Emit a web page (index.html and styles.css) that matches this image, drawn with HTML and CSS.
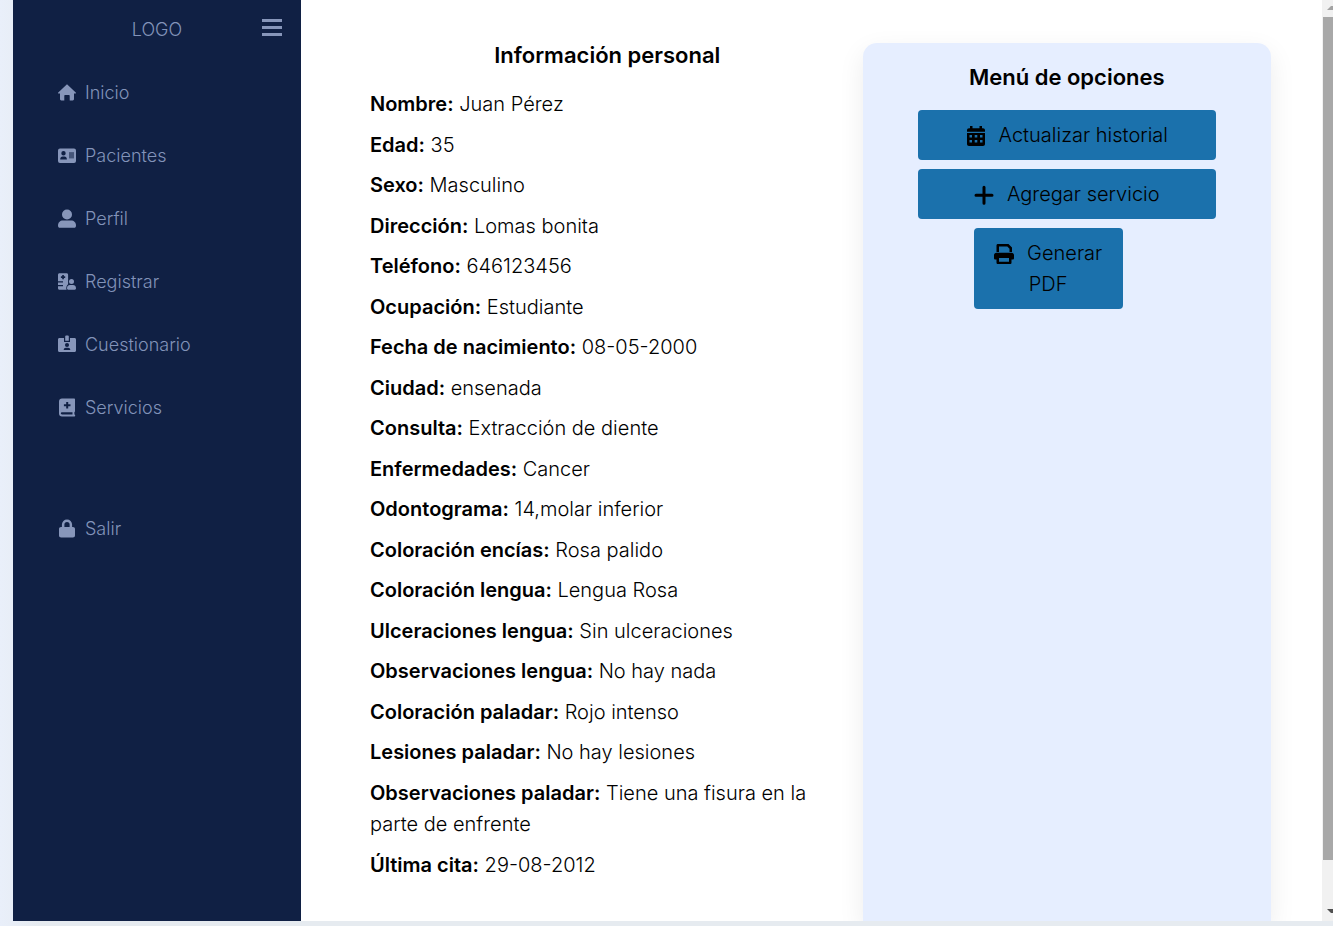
FILE: index.html
```html
<!DOCTYPE html>
<html lang="es">
<head>
<meta charset="utf-8">
<title>Información personal</title>
<link rel="stylesheet" href="styles.css">
</head>
<body>
<div class="frame">
  <aside class="sidebar">
    <div class="brand">
      <span class="brand-name">LOGO</span>
      <button class="toggle" type="button" aria-label="Menú">
        <svg width="20" height="18" viewBox="0 0 20 18"><path d="M0 1h20v3H0zM0 8h20v3H0zM0 15h20v3H0z"/></svg>
      </button>
    </div>
    <nav class="nav">
      <a href="#"><svg viewBox="0 0 18 20"><path d="M9 1.2 0 9.7c-.1.6.2.9.8.9H2V16c0 .9.5 1.4 1.3 1.4h3V13c0-.7.4-1 1-1h3.400c.6 0 1 .3 1 1v4.400h3c.8 0 1.300-.5 1.300-1.400v-5.400h1.200c.6 0 .9-.3.8-.9z"/></svg>Inicio</a>
      <a href="#"><svg viewBox="0 0 18 20"><path fill-rule="evenodd" d="M2 2.500h14a2 2 0 0 1 2 2v10.500a2 2 0 0 1-2 2H2a2 2 0 0 1-2-2V4.500a2 2 0 0 1 2-2zM5.500 5a2.200 2.200 0 1 0 0 4.400 2.200 2.200 0 0 0 0-4.400zM2.200 13.400h6.700c0-2-1-3-2.500-3H4.700c-1.500 0-2.500 1-2.500 3zM11 6.200v6h5v-6z"/><path opacity=".45" d="M11 6.200h5v6h-5z"/></svg>Pacientes</a>
      <a href="#"><svg viewBox="0 0 18 20"><circle cx="9" cy="5.500" r="5"/><path d="M0 16.500c0-3 2-5 5-5h8c3 0 5 2 5 5 0 1.500-.7 2.300-2 2.300H2c-1.300 0-2-.8-2-2.300z"/></svg>Perfil</a>
      <a href="#"><svg viewBox="0 0 18 20"><path fill-rule="evenodd" d="M1.500 1.200h7c1 0 1.600.6 1.600 1.600v9.400c-1.200 1-1.800 2.500-1.800 4.400 0 .4.100.8.400 1.100H1.500C.6 17.700 0 17 0 16.200v-2h5v-1.300H0v-2.300h5V9.300H0V2.800c0-1 .6-1.600 1.500-1.600zM4.200 3v1.300H2.900V6h1.300v1.300h1.700V6h1.300V4.300H5.900V3z"/><circle cx="13.500" cy="9.500" r="2.500"/><path d="M9 16.300c0-2.200 1.300-3.300 3-3.300h3c1.700 0 3 1.100 3 3.300 0 .9-.4 1.400-1.200 1.400h-6.600c-.8 0-1.200-.5-1.200-1.400z"/></svg>Registrar</a>
      <a href="#"><svg viewBox="0 0 18 20"><path d="M7.200 1.500c0-.6.300-1 .9-1h1.800c.6 0 .9.400.9 1v4.300H7.200z"/><path fill-rule="evenodd" d="M1.500 3H6v3.900h6V3h4.500c.9 0 1.500.6 1.500 1.500v11c0 .9-.6 1.500-1.500 1.500h-15C.6 17 0 16.400 0 15.500v-11C0 3.600.6 3 1.500 3zM9 7.900a2 2 0 1 0 0 4.100 2 2 0 0 0 0-4.100zM5.700 14.900h6.600c0-1.500-1-2.200-2.200-2.200H7.900c-1.200 0-2.200.7-2.200 2.200z"/></svg>Cuestionario</a>
      <a href="#"><svg viewBox="0 0 18 20"><path fill-rule="evenodd" d="M4 .5h12c.6 0 1 .4 1 1v11.800c0 .5-.2.800-.6 1v2.300c.5.100.8.500.8 1 0 .6-.4 1-1 1H4c-1.800 0-3-1.200-3-3V3.500c0-1.800 1.200-3 3-3zm0 13.800c-1.600 0-1.600 2.200 0 2.200h10.500v-2.200zM8.200 4v2.300H5.900v2h2.300v2.300h2V8.300h2.300v-2h-2.300V4z"/></svg>Servicios</a>
      <a class="exit" href="#"><svg viewBox="0 0 18 20"><path fill-rule="evenodd" d="M3.900 8V5.600a5.100 5.100 0 0 1 10.200 0V8h.8c1.300 0 2.100.8 2.100 2v6.600c0 1.200-.8 2-2.100 2H3.100c-1.300 0-2.100-.8-2.100-2V10c0-1.200.8-2 2.100-2zm2.500 0h5.200V5.600a2.600 2.600 0 0 0-5.200 0z"/></svg>Salir</a>
    </nav>
  </aside>
  <main class="content">
    <section class="info">
      <h2>Información personal</h2>
      <p><b>Nombre:</b> Juan Pérez</p>
      <p><b>Edad:</b> 35</p>
      <p><b>Sexo:</b> Masculino</p>
      <p><b>Dirección:</b> Lomas bonita</p>
      <p><b>Teléfono:</b> 646123456</p>
      <p><b>Ocupación:</b> Estudiante</p>
      <p><b>Fecha de nacimiento:</b> 08-05-2000</p>
      <p><b>Ciudad:</b> ensenada</p>
      <p><b>Consulta:</b> Extracción de diente</p>
      <p><b>Enfermedades:</b> Cancer</p>
      <p><b>Odontograma:</b> 14,molar inferior</p>
      <p><b>Coloración encías:</b> Rosa palido</p>
      <p><b>Coloración lengua:</b> Lengua Rosa</p>
      <p><b>Ulceraciones lengua:</b> Sin ulceraciones</p>
      <p><b>Observaciones lengua:</b> No hay nada</p>
      <p><b>Coloración paladar:</b> Rojo intenso</p>
      <p><b>Lesiones paladar:</b> No hay lesiones</p>
      <p><b>Observaciones paladar:</b> Tiene una fisura en la parte de enfrente</p>
      <p><b>Última cita:</b> 29-08-2012</p>
    </section>
    <section class="options">
      <h2>Menú de opciones</h2>
      <button type="button"><svg viewBox="0 0 20 20"><path fill-rule="evenodd" d="M4 0h2.500v2.200h7V0H16v2.200h1c1.200 0 2 .8 2 2v1.500H1V4.200c0-1.200.8-2 2-2h1zM1 7h18v11c0 1.200-.8 2-2 2H3c-1.200 0-2-.8-2-2zm2.500 2v2.500H6V9zm5.200 0v2.500h2.600V9zM14 9v2.500h2.500V9zM3.500 14v2.500H6V14zm5.200 0v2.500h2.600V14zm5.300 0v2.500h2.500V14z"/></svg>Actualizar historial</button>
      <button type="button"><svg viewBox="0 0 20 20"><path d="M10 2.200v16M2 10.200h16" stroke="#000" stroke-width="3" stroke-linecap="round"/></svg>Agregar servicio</button>
      <button class="half" type="button"><svg viewBox="0 0 20 20"><path fill-rule="evenodd" d="M4 0h10.500L18 3.500V8h-2.500V4.700l-2.200-2.200H5V8H2.500V1.500C2.500.5 3 0 4 0z"/><path fill-rule="evenodd" d="M2.500 8.700h15c1.500 0 2.500 1 2.500 2.300v3c0 1-.5 1.500-1.500 1.500h-1v3c0 1-.5 1.500-1.500 1.500H4c-1 0-1.500-.5-1.500-1.500v-3h-1C.5 15.500 0 15 0 14v-3c0-1.300 1-2.300 2.500-2.300zM5 14v3.700h10V14z"/></svg>Generar PDF</button>
    </section>
  </main>
  <div class="scroll" aria-hidden="true">
    <svg viewBox="0 0 11 17"><path fill="#a3a3a3" d="M5 10h6V6H9z"/></svg>
    <div class="thumb"></div>
    <svg viewBox="0 0 11 17"><path fill="#505050" d="M5 5h6v4H9z"/></svg>
  </div>
</div>
</body>
</html>
```
FILE: styles.css
```css
* { box-sizing: border-box; }
body {
  margin: 0;
  min-height: 100vh;
  padding: 0 0 5px 13px;
  background: linear-gradient(90deg, #e9effa, #e6ebf0 40px);
  color: #000;
  font: 300 20px/1.5 Inter, "Liberation Sans", sans-serif;
}
.frame {
  display: flex;
  min-height: calc(100vh - 5px);
  background: #fff;
  overflow: hidden;
}
.sidebar {
  flex: 0 0 288px;
  background: #102044;
  color: #8293b9;
  font-size: 18px;
  line-height: 27px;
}
.brand {
  display: grid;
  grid-template-columns: 1fr auto 1fr;
  align-items: start;
  padding: 16px 19px 18px;
}
.brand-name { grid-column: 2; }
.toggle {
  justify-self: end;
  padding: 2px 0 0;
  border: 0;
  background: none;
}
.toggle svg { display: block; fill: #8796ba; }
.nav { display: flex; flex-direction: column; }
.nav a {
  display: flex;
  align-items: center;
  gap: 9px;
  padding: 18px 45px;
  color: inherit;
  text-decoration: none;
}
.nav svg { width: 18px; height: 20px; fill: #8796ba; }
.nav .exit { margin-top: 58px; }
.content {
  flex: 1;
  display: grid;
  grid-template-columns: 5fr 4fr;
  padding: 43px 51px 0;
  overflow: hidden;
}
.info { padding: 0 18px 20px; }
h2 {
  margin: 0 0 22px;
  font-size: 22px;
  line-height: 24px;
  font-weight: 600;
  text-align: center;
}
.info p { margin: 0 0 9px; line-height: calc(1em * 63 / 40); }
.info b { font-weight: 600; }
.options {
  display: flex;
  flex-direction: column;
  gap: 9px;
  padding: 22px 55px;
  border-radius: 14px 14px 0 0;
  background: #e6eeff;
  box-shadow: 0 9px 27px rgba(0, 0, 0, .08);
}
.options h2 { margin-bottom: 12px; }
.options button {
  padding: 10px 18px 9px;
  border: 0;
  border-radius: 4px;
  background: #1b71ac;
  color: #000;
  font: inherit;
  line-height: 31px;
}
.options .half { width: 50%; margin-left: 56px; }
.options button svg {
  width: 20px;
  height: 20px;
  margin-right: 13px;
  vertical-align: -4px;
}
.scroll {
  flex: 0 0 11px;
  display: flex;
  flex-direction: column;
  background: #f1f1f1;
}
.scroll svg { width: 11px; height: 17px; }
.thumb { flex: 0 0 calc(95% - 32px); margin-left: 1px; background: #a8a8a8; }
.scroll svg:last-child { margin-top: auto; }
```
